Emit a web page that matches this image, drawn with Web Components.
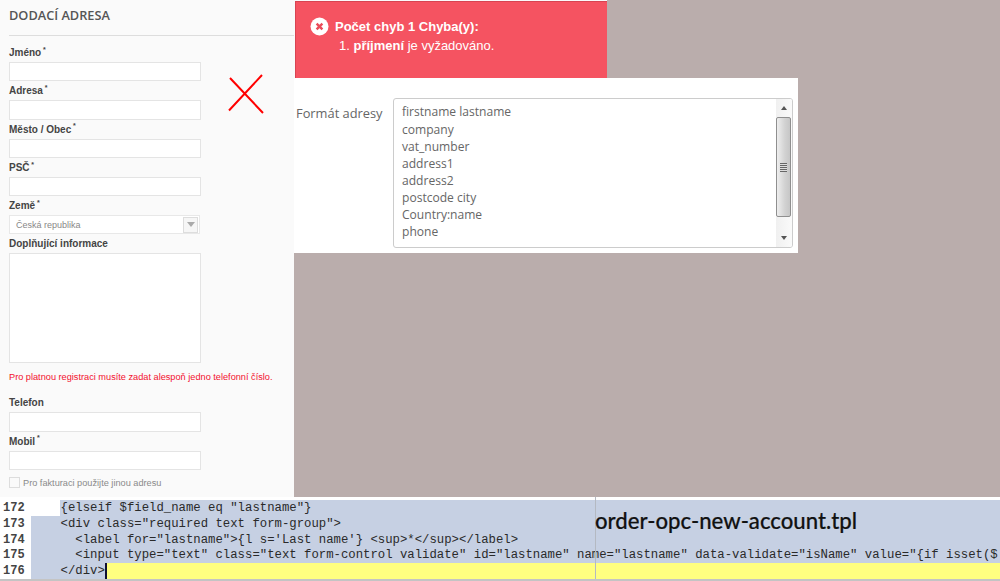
<!DOCTYPE html>
<html lang="cs">
<head>
<meta charset="utf-8">
<title>order-opc-new-account</title>
<style>
  html,body{margin:0;padding:0;background:#baadac;overflow:hidden;}
</style>
</head>
<body>
<shot-page>
  <shipping-form slot="left">
    <h-title>DODACÍ ADRESA</h-title>
    <form-field label="Jméno" required></form-field>
    <form-field label="Adresa" required></form-field>
    <form-field label="Město / Obec" required></form-field>
    <form-field label="PSČ" required></form-field>
    <form-select label="Země" required value="Česká republika"></form-select>
    <form-area label="Doplňující informace"></form-area>
    <phone-note>Pro platnou registraci musíte zadat alespoň jedno telefonní číslo.</phone-note>
    <form-field label="Telefon"></form-field>
    <form-field label="Mobil" required></form-field>
    <check-row>Pro fakturaci použijte jinou adresu</check-row>
  </shipping-form>
  <error-alert slot="right"></error-alert>
  <address-format slot="right"></address-format>
  <code-view slot="bottom"></code-view>
</shot-page>

<script>
const fieldCss=`
  label{display:block;height:19px;box-sizing:border-box;padding-top:4px;font:bold 10px/12px "Liberation Sans",Arial,sans-serif;color:#444;}
  sup{font-size:7px;line-height:0;font-weight:bold;margin-left:-1px;}
  .box{box-sizing:border-box;width:192px;background:#fff;border:1px solid #e4e4e4;}
`;
const labelHtml=el=>`<label>${el.getAttribute("label")}${el.hasAttribute("required")?" <sup>*</sup>":""}</label>`;

class shotPage extends HTMLElement{
  constructor(){
    super();
    this.shadow=this.attachShadow({mode:'open'});
    this.shadow.innerHTML=`
    <style>
      :host{display:flex;flex-direction:column;width:1000px;height:581px;overflow:hidden;background:#baadac;}
      .top{display:flex;height:497px;}
      .left{width:294px;flex:none;}
      .right{display:flex;flex-direction:column;align-items:flex-start;}
    </style>
    <div class="top">
      <div class="left"><slot name="left"></slot></div>
      <div class="right"><slot name="right"></slot></div>
    </div>
    <slot name="bottom"></slot>
    `;
  }
}
customElements.define('shot-page',shotPage);

class shippingForm extends HTMLElement{
  constructor(){
    super();
    this.attachShadow({mode:'open'}).innerHTML=`
    <style>
      :host{display:block;height:497px;box-sizing:border-box;background:#fafafa;padding-left:9px;position:relative;}
      .cross{position:absolute;left:227px;top:74px;}
    </style>
    <slot></slot>
    <svg class="cross" width="38" height="41" viewBox="0 0 38 41">
      <path d="M2 36.500L35 1M3 4L36 39" fill="none" stroke="#f00" stroke-width="2"/>
    </svg>
    `;
  }
}
customElements.define('shipping-form',shippingForm);

class hTitle extends HTMLElement{
  constructor(){
    super();
    this.attachShadow({mode:'open'}).innerHTML=`
    <style>
      :host{display:block;height:36px;box-sizing:border-box;border-bottom:1px solid #ddd;margin-bottom:7px;padding-top:7px;font:600 12.75px/16px "Open Sans",sans-serif;color:#555;}
    </style>
    <slot></slot>`;
  }
}
customElements.define('h-title',hTitle);

class formField extends HTMLElement{
  connectedCallback(){
    if(this.shadowRoot)return;
    this.attachShadow({mode:'open'}).innerHTML=`
    <style>
      :host{display:block;height:38.33px;}
      ${fieldCss}
      .box{height:19.33px;}
    </style>
    ${labelHtml(this)}<div class="box"></div>`;
  }
}
customElements.define('form-field',formField);

class formSelect extends HTMLElement{
  connectedCallback(){
    if(this.shadowRoot)return;
    this.attachShadow({mode:'open'}).innerHTML=`
    <style>
      :host{display:block;height:37.33px;}
      ${fieldCss}
      .box{display:flex;align-items:center;height:19px;width:191px;padding-left:6px;border-color:#e8e8e8;font:9px/12px "Liberation Sans",Arial,sans-serif;color:#888;}
      span{flex:1;}
      i{display:flex;align-items:center;justify-content:center;width:15px;height:16px;box-sizing:border-box;border:1px solid #ddd;background:#f6f6f6;margin-right:1px;}
      i::after{content:"";border:4px solid transparent;border-top:5px solid #aaa;border-bottom:0;}
    </style>
    ${labelHtml(this)}<div class="box"><span>${this.getAttribute("value")}</span><i></i></div>`;
  }
}
customElements.define('form-select',formSelect);

class formArea extends HTMLElement{
  connectedCallback(){
    if(this.shadowRoot)return;
    this.attachShadow({mode:'open'}).innerHTML=`
    <style>
      :host{display:block;height:129px;}
      ${fieldCss}
      .box{height:110px;}
    </style>
    ${labelHtml(this)}<div class="box"></div>`;
  }
}
customElements.define('form-area',formArea);

class phoneNote extends HTMLElement{
  constructor(){
    super();
    this.attachShadow({mode:'open'}).innerHTML=`
    <style>
      :host{display:block;height:30.7px;box-sizing:border-box;padding-top:8px;font:9.2px/12px "Liberation Sans",Arial,sans-serif;color:#f3112f;white-space:nowrap;}
    </style>
    <slot></slot>`;
  }
}
customElements.define('phone-note',phoneNote);

class checkRow extends HTMLElement{
  constructor(){
    super();
    this.attachShadow({mode:'open'}).innerHTML=`
    <style>
      :host{display:flex;align-items:center;gap:3px;height:12px;margin-top:7px;font:9.2px/12px "Liberation Sans",Arial,sans-serif;color:#8a8a8a;}
      i{box-sizing:border-box;width:11px;height:11px;border:1px solid #ddd;background:#fafafa;}
    </style>
    <i></i><slot></slot>`;
  }
}
customElements.define('check-row',checkRow);

class errorAlert extends HTMLElement{
  constructor(){
    super();
    this.attachShadow({mode:'open'}).innerHTML=`
    <style>
      :host{display:block;width:313px;height:78px;box-sizing:border-box;padding:1px 0 0 1px;background:#fafafa;}
      .alert{box-sizing:border-box;height:77px;width:312px;background:#f55361;border:1px solid #d84452;border-bottom:0;border-right:0;color:#fff;font:13px/19px "Liberation Sans",Arial,sans-serif;padding:15px 0 0 14px;}
      .head{display:flex;align-items:center;gap:6px;font-weight:bold;}
      svg{flex:none;}
      .item{padding-left:29px;}
    </style>
    <div class="alert">
      <div class="head">
        <svg width="19" height="19" viewBox="0 0 19 19"><circle cx="9.500" cy="9.500" r="9" fill="#fff"/><path d="M6.600 6.600L12.400 12.400M12.400 6.600L6.600 12.400" stroke="#ea4c5a" stroke-width="2.400"/></svg>
        <span>Počet chyb 1 Chyba(y):</span>
      </div>
      <div class="item">1. <b>příjmení</b> je vyžadováno.</div>
    </div>`;
  }
}
customElements.define('error-alert',errorAlert);

class addressFormat extends HTMLElement{
  constructor(){
    super();
    const rows=["firstname lastname","company","vat_number","address1","address2","postcode city","Country:name","phone"];
    this.attachShadow({mode:'open'}).innerHTML=`
    <style>
      :host{display:flex;width:504px;height:175px;box-sizing:border-box;background:#fff;padding:20px 5px 0 2px;font:12.85px/18px "Open Sans",sans-serif;color:#666;}
      .lbl{width:97px;flex:none;padding-top:6px;}
      .box{flex:1;height:150px;box-sizing:border-box;display:flex;border:1px solid #ccc;border-radius:3px;overflow:hidden;}
      .rows{flex:1;padding:4px 0 0 8px;font-size:12.07px;line-height:17px;white-space:nowrap;}
      .rows div:first-child{height:18px;}
      .bar{display:flex;flex-direction:column;width:16px;flex:none;background:linear-gradient(90deg,#f0f0f0,#fafafa);}
      .btn{height:18px;display:flex;align-items:center;justify-content:center;}
      .up::after{content:"";border:3.500px solid transparent;border-bottom:4px solid #555;border-top:0;}
      .down::after{content:"";border:3.500px solid transparent;border-top:4px solid #555;border-bottom:0;}
      .thumb{height:100px;flex:none;box-sizing:border-box;margin:0 1px 0 0;border:1px solid #8f8f8f;border-radius:2px;background:linear-gradient(90deg,#eee,#d2d2d2 60%,#c6c6c6);display:flex;align-items:center;justify-content:center;}
      .thumb::after{content:"";width:7px;height:9px;background:repeating-linear-gradient(#666 0 1px,#ddd 1px 2px);}
      .down{flex:1;align-items:flex-end;padding-bottom:7px;}
    </style>
    <div class="lbl">Formát adresy</div>
    <div class="box">
      <div class="rows">${rows.map(r=>`<div>${r}</div>`).join("")}</div>
      <div class="bar"><div class="btn up"></div><div class="thumb"></div><div class="btn down"></div></div>
    </div>`;
  }
}
customElements.define('address-format',addressFormat);

class codeView extends HTMLElement{
  constructor(){
    super();
    const esc=s=>s.replace(/&/g,"&amp;").replace(/</g,"&lt;");
    const rows=[
      [172,`    {elseif $field_name eq "lastname"}`,"first"],
      [173,`    <div class="required text form-group">`,""],
      [174,`      <label for="lastname">{l s='Last name'} <sup>*</sup></label>`,""],
      [175,`      <input type="text" class="text form-control validate" id="lastname" name="lastname" data-validate="isName" value="{if isset($`,""],
      [176,`    </div>`,"last"],
    ];
    this.attachShadow({mode:'open'}).innerHTML=`
    <style>
      :host{display:block;position:relative;height:84px;box-sizing:border-box;background:#fff;padding-top:3px;overflow:hidden;}
      .row{display:flex;height:15.750px;font:12.3px/15.750px "Liberation Mono","Courier New",monospace;color:#2a2a2a;}
      .no,.code{box-sizing:border-box;height:15.750px;padding-top:1px;overflow:hidden;}
      .no{width:31px;flex:none;padding-left:3px;font-size:12px;font-weight:bold;background:#fff;color:#444;}
      .code{flex:1;white-space:pre;background:#c6d0e3;}
      .first .code{background:linear-gradient(90deg,#fff 29px,#c6d0e3 29px);}
      .last .code{background:linear-gradient(90deg,#c6d0e3 74px,#ffff80 74px);}
      .caret{display:inline-block;width:2px;height:15.750px;margin-top:-1px;background:#113;vertical-align:top;}
      .edge{position:absolute;left:595px;top:0;bottom:2px;width:1px;background:#b4b9c2;}
      .name{position:absolute;left:595px;top:9px;font:500 22.150px/30px Lato,sans-serif;-webkit-text-stroke:.2px #111;color:#111;}
      .foot{height:3px;background:#c4c4c4;}
    </style>
    ${rows.map(([n,c,k])=>`<div class="row ${k}"><div class="no">${n}</div><div class="code">${esc(c)}${k=="last"?'<span class="caret"></span>':''}</div></div>`).join("")}
    <div class="foot"></div>
    <div class="edge"></div>
    <div class="name">order-opc-new-account.tpl</div>
    `;
  }
}
customElements.define('code-view',codeView);
</script>
</body>
</html>
